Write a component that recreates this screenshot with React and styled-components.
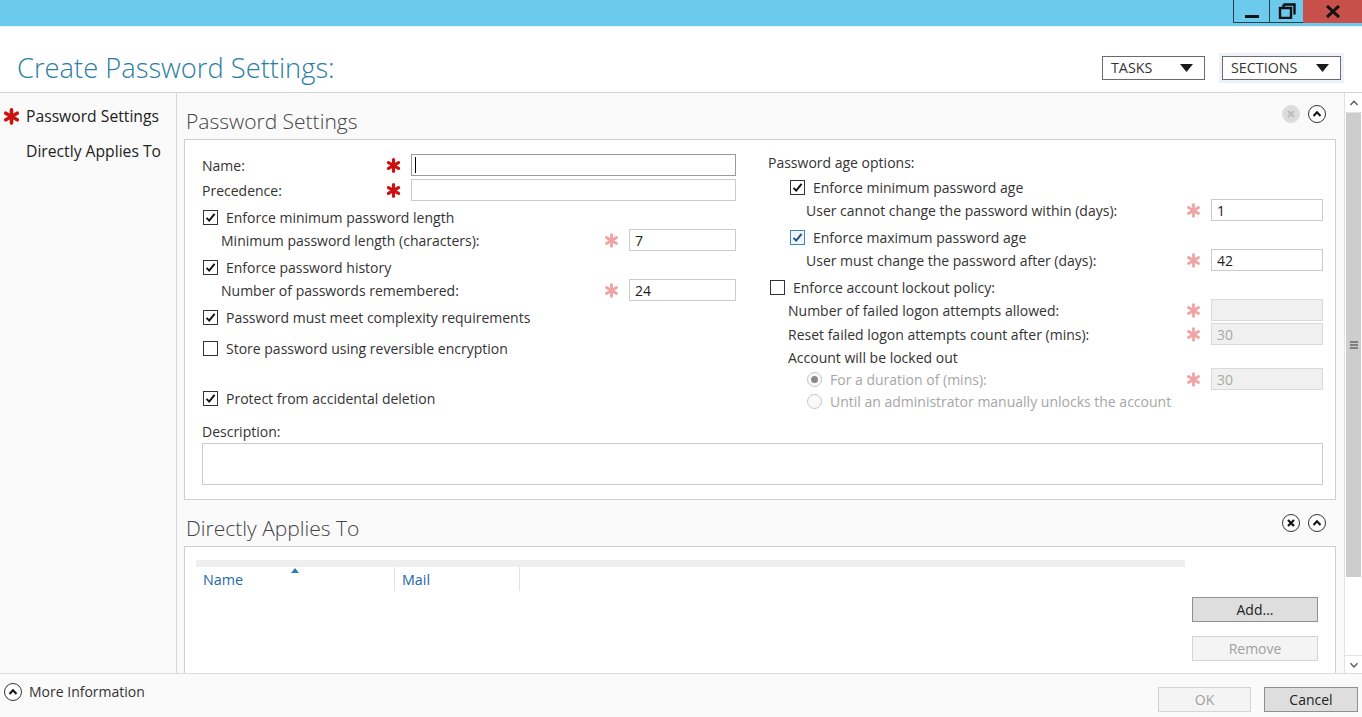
import React from 'react'
import styled, { createGlobalStyle } from 'styled-components'

const GlobalStyle = createGlobalStyle`
  html, body { margin: 0; padding: 0; }
  body {
    font-family: "Open Sans", "Noto Sans", sans-serif;
    color: #333;
    background: #fff;
  }
  * { box-sizing: border-box; }
`

const Window = styled.div`
  width: 1362px;
  height: 717px;
  display: flex;
  flex-direction: column;
  overflow: hidden;
  background: #fff;
`

const TitleBar = styled.div`
  height: 27px;
  flex: none;
  background: #6ccbec;
  border-bottom: 1px solid #e6f4fa;
  display: flex;
  justify-content: flex-end;
  align-items: flex-start;
`

const WinButton = styled.div`
  width: ${p => p.w}px;
  height: 23px;
  background: ${p => p.bg || 'transparent'};
  border-left: ${p => (p.bare ? 'none' : '1px solid #2f3d46')};
  border-bottom: ${p => (p.bare ? 'none' : '1px solid #2f3d46')};
  display: flex;
  align-items: center;
  justify-content: center;
`

const Header = styled.div`
  height: 66px;
  flex: none;
  display: flex;
  align-items: center;
  padding: 16px 21px 0 17px;
  border-bottom: 1px solid #d3d3d3;
`

const Title = styled.h1`
  margin: 0;
  flex: 1;
  font-size: 27.3px;
  font-weight: 300;
  color: #2b7ea3;
`

const DropButton = styled.div`
  width: ${p => p.w}px;
  height: 24px;
  margin-left: ${p => p.gap || 0}px;
  border: 1px solid #6b6b6b;
  background: #fff;
  box-shadow: ${p => (p.active ? '0 0 0 3px #eef3fb' : 'none')};
  display: flex;
  align-items: center;
  justify-content: space-between;
  padding: 0 11px 0 8px;
  font-size: 14.3px;
  color: #333;
`

const Body = styled.div`
  flex: 1;
  display: flex;
  min-height: 0;
`

const Nav = styled.nav`
  width: 177px;
  flex: none;
  background: #fafafa;
  border-right: 1px solid #d6d6d6;
  padding: 11px 0 0 3px;
`

const NavItem = styled.div`
  height: 24px;
  margin-bottom: 11px;
  display: flex;
  align-items: center;
  font-size: 15.7px;
  color: #222;
`

const NavMark = styled.span`
  width: 23px;
  flex: none;
  display: flex;
  align-items: center;
`

const Main = styled.main`
  flex: 1;
  min-width: 0;
  background: #fafafa;
  padding: 0 8px 0 7px;
  overflow: hidden;
`

const SectionHead = styled.div`
  height: 46px;
  display: flex;
  align-items: flex-end;
  justify-content: space-between;
  padding: 0 10px 4px 2px;
`

const SectionTitle = styled.h2`
  margin: 0;
  font-size: 21px;
  line-height: 28px;
  font-weight: 300;
  color: #444;
`

const HeadIcons = styled.div`
  display: flex;
  gap: 8px;
  margin-bottom: ${p => p.lift}px;
`

const CircleIcon = styled.span`
  width: 18px;
  height: 18px;
  border-radius: 50%;
  display: flex;
  align-items: center;
  justify-content: center;
  background: ${p => (p.muted ? '#dcdcdc' : '#fff')};
  border: 1px solid ${p => (p.muted ? '#dcdcdc' : '#333')};
`

const Box = styled.section`
  background: #fff;
  border: 1px solid #cfcfcf;
  ${p => (p.open ? 'border-bottom: none; height: 200px;' : '')}
`

const FormGrid = styled.div`
  display: grid;
  grid-template-columns: 534px 555px;
  column-gap: 32px;
  padding: 11px 11px 14px 17px;
`

const Column = styled.div`
  display: flex;
  flex-direction: column;
`

const Row = styled.div`
  height: 22px;
  margin-top: ${p => p.mt || 0}px;
  padding-left: ${p => p.indent || 0}px;
  display: flex;
  align-items: center;
  font-size: 14px;
  color: ${p => (p.dim ? '#a6a6a6' : '#333')};
  white-space: nowrap;
`

const Label = styled.span`
  flex: 1;
`

const ReqSlot = styled.span`
  width: 18px;
  margin-right: 9px;
  display: flex;
  justify-content: center;
  align-items: center;
`

const Field = styled.div`
  width: ${p => p.w}px;
  height: 22px;
  border: 1px solid ${p => (p.focus ? '#9a9a9a' : p.off ? '#dadada' : '#cbcbcb')};
  background: ${p => (p.off ? '#f0f0f0' : '#fff')};
  color: ${p => (p.off ? '#a8a8a8' : '#222')};
  font-size: 14px;
  padding: 0 5px;
  display: flex;
  align-items: center;
`

const Caret = styled.span`
  width: 1px;
  height: 16px;
  margin-left: -2px;
  background: #000;
`

const Check = styled.span`
  width: 15px;
  height: 15px;
  flex: none;
  margin-right: 8px;
  border: 1px solid ${p => (p.hover ? '#3d88bd' : '#333')};
  background: ${p => (p.hover ? '#eef6fc' : '#fff')};
  display: flex;
  align-items: center;
  justify-content: center;
`

const Radio = styled.span`
  width: 15px;
  height: 15px;
  flex: none;
  margin-right: 8px;
  border-radius: 50%;
  border: 1px solid #c4c4c4;
  background: #fafafa;
  display: flex;
  align-items: center;
  justify-content: center;
  &::after {
    content: '';
    width: 7px;
    height: 7px;
    border-radius: 50%;
    background: ${p => (p.on ? '#8a8a8a' : 'transparent')};
  }
`

const Description = styled.div`
  grid-column: 1 / -1;
  margin-top: 10px;
  font-size: 14px;
  color: #333;
`

const TextArea = styled.div`
  margin-top: 2px;
  height: 42px;
  border: 1px solid #cbcbcb;
  background: #fff;
`

const AppliesBody = styled.div`
  display: flex;
  align-items: flex-start;
  padding: 13px 0 0 11px;
`

const Table = styled.div`
  width: 989px;
  height: 150px;
  background: #fff;
  border-top: 7px solid #efefef;
`

const TableHead = styled.div`
  display: flex;
  height: 28px;
`

const HeadCell = styled.div`
  position: relative;
  width: ${p => p.w}px;
  padding-left: 7px;
  display: flex;
  align-items: center;
  font-size: 14.3px;
  color: #2467a8;
  border-right: 1px solid #e2e2e2;
  margin: 0 0 4px;
`

const SortMark = styled.span`
  position: absolute;
  left: 95px;
  top: 1px;
  width: 0;
  height: 0;
  border-left: 4px solid transparent;
  border-right: 4px solid transparent;
  border-bottom: 5px solid #2b7cc0;
`

const SideButtons = styled.div`
  display: flex;
  flex-direction: column;
  gap: 14px;
  margin: 37px 0 0 7px;
`

const Button = styled.div`
  width: ${p => p.w}px;
  height: 25px;
  display: flex;
  align-items: center;
  justify-content: center;
  font-size: 14px;
  border: 1px solid ${p => (p.off ? '#d4d4d4' : '#8f8f8f')};
  background: ${p => (p.off ? '#f4f4f4' : '#dedede')};
  color: ${p => (p.off ? '#a0a0a0' : '#222')};
`

const ScrollBar = styled.div`
  width: 18px;
  flex: none;
  display: flex;
  flex-direction: column;
  background: #fff;
  border-left: 1px solid #e2e2e2;
`

const ScrollArrow = styled.div`
  height: ${p => p.h}px;
  display: flex;
  align-items: center;
  justify-content: center;
  border-bottom: ${p => (p.top ? '1px solid #e2e2e2' : 'none')};
  border-top: ${p => (p.top ? 'none' : '1px solid #e2e2e2')};
`

const Thumb = styled.div`
  height: 464px;
  margin: 0 1px;
  background: #cdcdcd;
  display: flex;
  align-items: center;
  justify-content: center;
`

const Track = styled.div`
  flex: 1;
`

const Footer = styled.footer`
  height: 44px;
  flex: none;
  border-top: 1px solid #dcdcdc;
  background: #fafafa;
  display: flex;
  align-items: flex-start;
  justify-content: space-between;
  padding: 0 4px;
`

const MoreInfo = styled.div`
  display: flex;
  align-items: center;
  gap: 7px;
  margin-top: 8px;
  font-size: 14px;
  color: #333;
`

const FooterButtons = styled.div`
  display: flex;
  align-items: flex-start;
  gap: 13px;
  margin-top: 13px;
`

const Asterisk = ({ color = '#cc1111', size = 15, weight = 3.4 }) => (
  <svg width={size} height={size} viewBox="0 0 16 16">
    <g stroke={color} strokeWidth={weight} strokeLinecap="round">
      <line x1="8" y1="1.8" x2="8" y2="14.2" />
      <line x1="2.6" y1="4.9" x2="13.4" y2="11.1" />
      <line x1="2.6" y1="11.1" x2="13.4" y2="4.9" />
    </g>
  </svg>
)

const Tick = ({ color = '#111' }) => (
  <svg width="11" height="11" viewBox="0 0 11 11">
    <path d="M1.5 5.8 L4.2 8.6 L9.6 1.8" fill="none" stroke={color} strokeWidth="1.9" />
  </svg>
)

const Chevron = ({ up = true, size = 10, color = '#111', w = 2 }) => (
  <svg width={size} height={size} viewBox="0 0 10 10">
    <path d={up ? 'M1.5 7 L5 3.3 L8.5 7' : 'M1.5 3.3 L5 7 L8.5 3.3'} fill="none" stroke={color} strokeWidth={w} />
  </svg>
)

const Cross = ({ color = '#111', w = 2.2 }) => (
  <svg width="10" height="10" viewBox="0 0 10 10">
    <path d="M2 2 L8 8 M8 2 L2 8" stroke={color} strokeWidth={w} />
  </svg>
)

const Triangle = () => (
  <svg width="13" height="8" viewBox="0 0 13 8">
    <path d="M0 0 H13 L6.5 8 Z" fill="#1a1a1a" />
  </svg>
)

const Req = ({ strong }) => (
  <ReqSlot>
    {strong ? <Asterisk /> : <Asterisk color="#f0a3a3" weight={3} />}
  </ReqSlot>
)

const CheckRow = ({ checked, hover, children, ...rest }) => (
  <Row {...rest}>
    <Check hover={hover}>{checked && <Tick color={hover ? '#1f4f7a' : '#111'} />}</Check>
    {children}
  </Row>
)

const ValueRow = ({ label, value, w, off, strong, focus, ...rest }) => (
  <Row {...rest}>
    <Label>{label}</Label>
    <Req strong={strong} />
    <Field w={w} off={off} focus={focus}>
      {focus ? <Caret /> : value}
    </Field>
  </Row>
)

export default function App() {
  return (
    <Window>
      <GlobalStyle />
      <TitleBar>
        <WinButton w={36}>
          <svg width="16" height="16" viewBox="0 0 16 16">
            <rect x="1" y="12" width="14" height="3" fill="#111" />
          </svg>
        </WinButton>
        <WinButton w={34}>
          <svg width="18" height="16" viewBox="0 0 18 16">
            <path d="M5.5 1.5 H16.5 V11.5 M2 5 H13 V15 H2 Z M5.5 1.5 V5" fill="none" stroke="#111" strokeWidth="2.4" />
          </svg>
        </WinButton>
        <WinButton w={59} bg="#c7514a" bare>
          <svg width="16" height="13" viewBox="0 0 16 13">
            <path d="M2 1 L14 12 M14 1 L2 12" stroke="#111" strokeWidth="3" />
          </svg>
        </WinButton>
      </TitleBar>

      <Header>
        <Title>Create Password Settings:</Title>
        <DropButton w={103}>
          TASKS <Triangle />
        </DropButton>
        <DropButton w={119} gap={17} active>
          SECTIONS <Triangle />
        </DropButton>
      </Header>

      <Body>
        <Nav>
          <NavItem>
            <NavMark><Asterisk size={17} /></NavMark>
            Password Settings
          </NavItem>
          <NavItem>
            <NavMark />
            Directly Applies To
          </NavItem>
        </Nav>

        <Main>
          <SectionHead>
            <SectionTitle>Password Settings</SectionTitle>
            <HeadIcons lift={12}>
              <CircleIcon muted><Cross color="#bdbdbd" w={2} /></CircleIcon>
              <CircleIcon><Chevron /></CircleIcon>
            </HeadIcons>
          </SectionHead>

          <Box>
            <FormGrid>
              <Column>
                <ValueRow mt={3} label="Name:" w={325} strong focus />
                <ValueRow mt={3} label="Precedence:" w={325} strong />
                <CheckRow mt={5} indent={1} checked>Enforce minimum password length</CheckRow>
                <ValueRow mt={1} indent={19} label="Minimum password length (characters):" value="7" w={107} />
                <CheckRow mt={5} indent={1} checked>Enforce password history</CheckRow>
                <ValueRow mt={1} indent={19} label="Number of passwords remembered:" value="24" w={107} />
                <CheckRow mt={5} indent={1} checked>Password must meet complexity requirements</CheckRow>
                <CheckRow mt={9} indent={1}>Store password using reversible encryption</CheckRow>
                <CheckRow mt={28} indent={1} checked>Protect from accidental deletion</CheckRow>
              </Column>

              <Column>
                <Row>Password age options:</Row>
                <CheckRow mt={3} indent={22} checked>Enforce minimum password age</CheckRow>
                <ValueRow mt={1} indent={38} label="User cannot change the password within (days):" value="1" w={112} />
                <CheckRow mt={5} indent={22} checked hover>Enforce maximum password age</CheckRow>
                <ValueRow mt={1} indent={38} label="User must change the password after (days):" value="42" w={112} />
                <CheckRow mt={5} indent={2}>Enforce account lockout policy:</CheckRow>
                <ValueRow mt={1} indent={20} label="Number of failed logon attempts allowed:" value="" w={112} off />
                <ValueRow mt={2} indent={20} label="Reset failed logon attempts count after (mins):" value="30" w={112} off />
                <Row mt={1} indent={20}>Account will be locked out</Row>
                <Row indent={39} dim>
                  <Radio on />
                  <Label>For a duration of (mins):</Label>
                  <Req />
                  <Field w={112} off>30</Field>
                </Row>
                <Row indent={39} dim>
                  <Radio />
                  Until an administrator manually unlocks the account
                </Row>
              </Column>

              <Description>
                Description:
                <TextArea />
              </Description>
            </FormGrid>
          </Box>

          <SectionHead>
            <SectionTitle>Directly Applies To</SectionTitle>
            <HeadIcons lift={10}>
              <CircleIcon><Cross /></CircleIcon>
              <CircleIcon><Chevron /></CircleIcon>
            </HeadIcons>
          </SectionHead>

          <Box open>
            <AppliesBody>
              <Table>
                <TableHead>
                  <HeadCell w={199}>
                    <SortMark />
                    Name
                  </HeadCell>
                  <HeadCell w={125}>Mail</HeadCell>
                </TableHead>
              </Table>
              <SideButtons>
                <Button w={126}>Add...</Button>
                <Button w={126} off>Remove</Button>
              </SideButtons>
            </AppliesBody>
          </Box>
        </Main>

        <ScrollBar>
          <ScrollArrow h={20} top><Chevron color="#555" w={1.3} /></ScrollArrow>
          <Thumb>
            <svg width="8" height="8" viewBox="0 0 8 8">
              <path d="M0 1 H8 M0 4 H8 M0 7 H8" stroke="#666" strokeWidth="1.3" />
            </svg>
          </Thumb>
          <Track />
          <ScrollArrow h={18}><Chevron up={false} color="#555" w={1.3} /></ScrollArrow>
        </ScrollBar>
      </Body>

      <Footer>
        <MoreInfo>
          <CircleIcon><Chevron /></CircleIcon>
          More Information
        </MoreInfo>
        <FooterButtons>
          <Button w={93} off>OK</Button>
          <Button w={94}>Cancel</Button>
        </FooterButtons>
      </Footer>
    </Window>
  )
}
